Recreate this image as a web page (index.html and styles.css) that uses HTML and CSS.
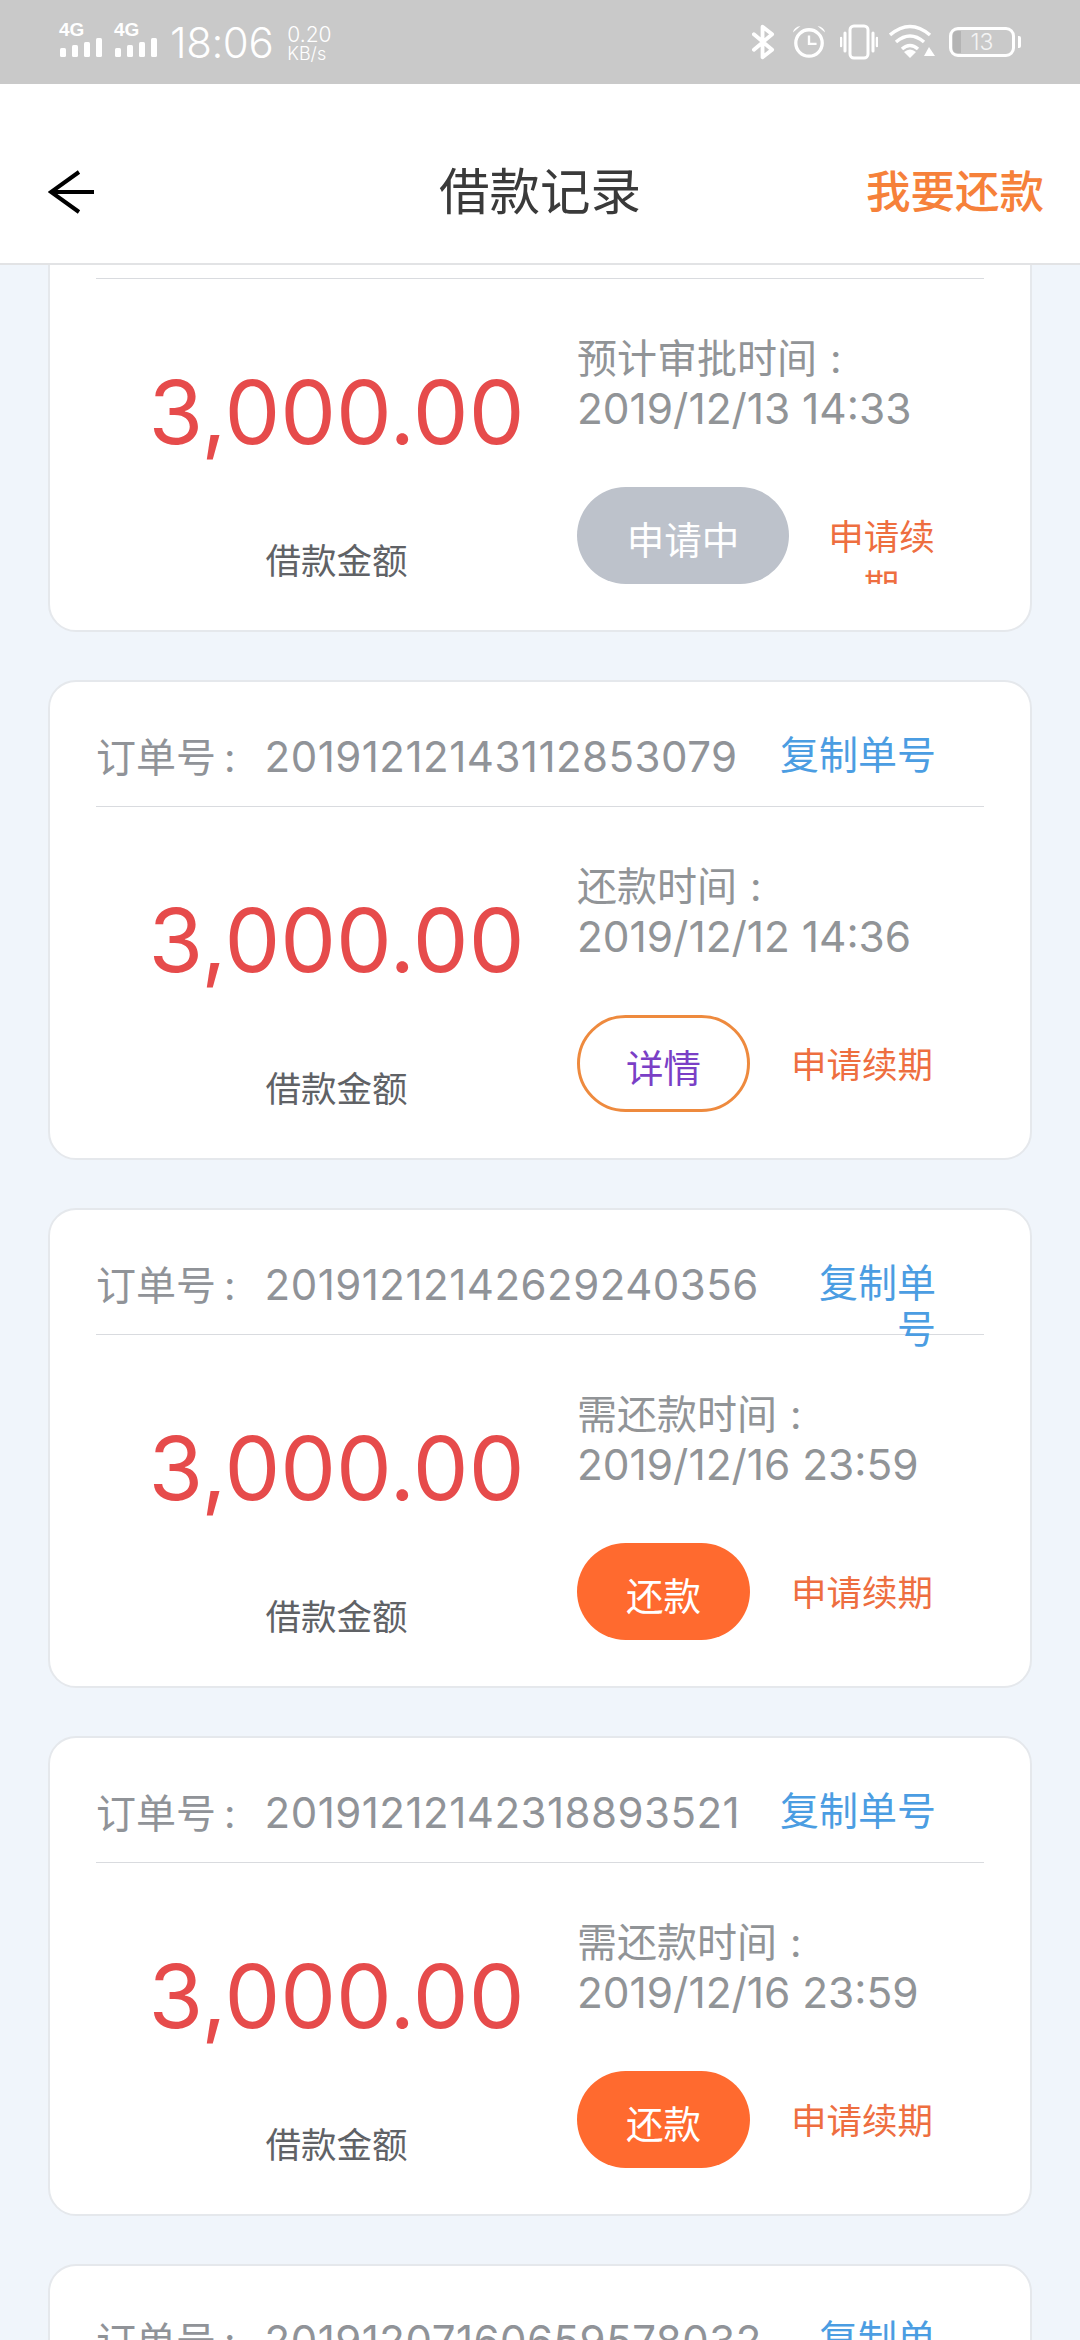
FILE: index.html
```html
<!DOCTYPE html>
<html lang="zh-CN">
<head>
<meta charset="utf-8">
<title>借款记录</title>
<link rel="stylesheet" href="styles.css">
</head>
<body>
<div class="status">
  <div class="status-left">
    <div class="sig"><span class="sig-label">4G</span>
      <svg class="sig-bars" width="44" height="20" viewBox="0 0 44 20"><rect x="1" y="10" width="6" height="9" rx="1.5"/><rect x="13" y="7" width="6" height="12" rx="1.5"/><rect x="25" y="4" width="6" height="15" rx="1.5"/><rect x="37" y="0" width="6" height="19" rx="1.5"/></svg></div>
    <div class="sig"><span class="sig-label">4G</span>
      <svg class="sig-bars" width="44" height="20" viewBox="0 0 44 20"><rect x="1" y="10" width="6" height="9" rx="1.5"/><rect x="13" y="7" width="6" height="12" rx="1.5"/><rect x="25" y="4" width="6" height="15" rx="1.5"/><rect x="37" y="0" width="6" height="19" rx="1.5"/></svg></div>
    <span class="clock">18:06</span>
    <div class="speed"><span>0.20</span><span class="speed-unit">KB/s</span></div>
  </div>
  <div class="status-right">
    <svg width="23" height="36" viewBox="0 0 24 36" class="ic ic-bt"><path d="M2 10 L21 26 L11 34 V2 L21 10 L2 26" fill="none" stroke="#fff" stroke-width="4" stroke-linejoin="round" stroke-linecap="round"/></svg>
    <svg width="34" height="36" viewBox="0 0 36 36" class="ic"><circle cx="18" cy="19" r="14" fill="none" stroke="#fff" stroke-width="3.5"/><path d="M18 11 V20 H26" fill="none" stroke="#fff" stroke-width="2.5"/><path d="M1 8 Q2 2 9 1 Z M35 8 Q34 2 27 1 Z" fill="#fff"/></svg>
    <svg width="38" height="36" viewBox="0 0 38 36" class="ic ic-vib"><rect x="10" y="2" width="18" height="32" rx="4" fill="none" stroke="#fff" stroke-width="3"/><path d="M5 9 V27 M33 9 V27" stroke="#fff" stroke-width="3" stroke-linecap="round"/><path d="M1 14 V22 M37 14 V22" stroke="#fff" stroke-width="2.5" stroke-linecap="round"/></svg>
    <svg width="46" height="36" viewBox="0 0 46 36" class="ic"><path d="M1 11 Q21 -6 41 11 M7 18 Q21 6 35 18 M13 25 Q21 18 29 25" fill="none" stroke="#fff" stroke-width="3.5"/><path d="M15 28 Q21 23 27 28 L21 34 Z" fill="#fff"/><path d="M40 23 L46 32 H35 Z" fill="#fff"/></svg>
    <div class="battery"><span class="battery-level"></span><span class="battery-num">13</span><span class="battery-cap"></span></div>
  </div>
</div>

<header class="nav">
  <svg class="back" width="48" height="44" viewBox="0 0 48 44"><path d="M31 2 L3 22 L31 42 M3 22 H46" fill="none" stroke="#000" stroke-width="4"/></svg>
  <h1 class="nav-title">借款记录</h1>
  <a class="nav-action">我要还款</a>
</header>

<main class="viewport">
  <div class="list">
    <section class="card">
      <div class="head"></div>
      <div class="body">
        <div class="left"><div class="amount">3,000.00</div><div class="amount-label">借款金额</div></div>
        <div class="right">
          <div class="meta">预计审批时间<span class="colon">:</span></div>
          <div class="meta meta-num">2019/12/13 14:33</div>
          <div class="actions"><span class="btn btn-gray">申请中</span><a class="renew">申请续期</a></div>
        </div>
      </div>
    </section>
    <section class="card">
      <div class="head"><span class="order">订单号<span class="order-colon">:</span><span class="order-num">20191212143112853079</span></span><a class="copy">复制单号</a></div>
      <div class="body">
        <div class="left"><div class="amount">3,000.00</div><div class="amount-label">借款金额</div></div>
        <div class="right">
          <div class="meta">还款时间<span class="colon">:</span></div>
          <div class="meta meta-num">2019/12/12 14:36</div>
          <div class="actions"><span class="btn btn-outline">详情</span><a class="renew">申请续期</a></div>
        </div>
      </div>
    </section>
    <section class="card">
      <div class="head"><span class="order">订单号<span class="order-colon">:</span><span class="order-num">20191212142629240356</span></span><a class="copy">复制单号</a></div>
      <div class="body">
        <div class="left"><div class="amount">3,000.00</div><div class="amount-label">借款金额</div></div>
        <div class="right">
          <div class="meta">需还款时间<span class="colon">:</span></div>
          <div class="meta meta-num">2019/12/16 23:59</div>
          <div class="actions"><span class="btn btn-orange">还款</span><a class="renew">申请续期</a></div>
        </div>
      </div>
    </section>
    <section class="card">
      <div class="head"><span class="order">订单号<span class="order-colon">:</span><span class="order-num">20191212142318893521</span></span><a class="copy">复制单号</a></div>
      <div class="body">
        <div class="left"><div class="amount">3,000.00</div><div class="amount-label">借款金额</div></div>
        <div class="right">
          <div class="meta">需还款时间<span class="colon">:</span></div>
          <div class="meta meta-num">2019/12/16 23:59</div>
          <div class="actions"><span class="btn btn-orange">还款</span><a class="renew">申请续期</a></div>
        </div>
      </div>
    </section>
    <section class="card">
      <div class="head"><span class="order">订单号<span class="order-colon">:</span><span class="order-num">20191207160659578032</span></span><a class="copy">复制单号</a></div>
    </section>
  </div>
</main>
</body>
</html>
```
FILE: styles.css
```css
* { box-sizing: border-box; }
html, body { margin: 0; padding: 0; height: 2340px; overflow: hidden; }
body {
  width: 1080px;
  background: #f0f5fb;
  font-family: "Inter", "Noto Sans CJK SC", sans-serif;
  display: flex;
  flex-direction: column;
}

/* status bar */
.status {
  height: 84px;
  flex: none;
  background: #c9c9c9;
  color: #fff;
  display: flex;
  justify-content: space-between;
  align-items: center;
  padding: 0 60px 0 59px;
}
.status-left { display: flex; align-items: center; }
.sig { display: flex; flex-direction: column; width: 44px; margin-right: 11px; margin-top: -4px; }
.sig-label { font: 700 19px/14px "Liberation Sans", sans-serif; height: 15px; }
.sig-bars { fill: #fff; display: block; }
.clock { font-size: 42px; line-height: 44px; font-weight: 300; margin-left: 1px; margin-top: 2px; letter-spacing: -0.4px; }
.speed { display: flex; flex-direction: column; font-size: 21px; line-height: 20px; margin-left: 14px; margin-top: 2px; font-weight: 300; }
.speed-unit { font-size: 18px; line-height: 17px; }
.status-right { display: flex; align-items: center; gap: 14px; margin-top: -1px; }
.ic { display: block; }
.ic-bt { margin-right: 3px; }
.ic-vib { margin-right: -3px; }
.battery {
  position: relative;
  width: 66px; height: 30px;
  border: 3px solid #fff;
  border-radius: 9px;
  display: flex; align-items: center; justify-content: center;
  margin-right: 5px;
}
.battery-level { position: absolute; left: 1px; top: 1px; bottom: 1px; width: 8px; background: #b4b4b4; border-radius: 4px 0 0 4px; }
.battery-num { font-size: 23px; font-weight: 300; color: #f4f4f4; }
.battery-cap { position: absolute; right: -9px; top: 6px; width: 3px; height: 12px; background: #fff; border-radius: 0 2px 2px 0; }

/* navigation */
.nav {
  height: 181px;
  flex: none;
  background: #fff;
  border-bottom: 2px solid #e2e3e5;
  display: grid;
  grid-template-columns: 1fr auto 1fr;
  align-items: center;
  padding: 37px 36px 0;
}
.back { display: block; margin-left: 12px; }
.nav-title { margin: 0; font-size: 50.5px; line-height: 60px; font-weight: 400; color: #3a3a3a; }
.nav-action { justify-self: end; font-size: 44.5px; line-height: 60px; font-weight: 500; color: #f6813a; }

/* list */
.viewport { flex: 1; overflow: hidden; min-height: 0; padding: 0 48px; }
.list { display: flex; flex-direction: column; gap: 48px; margin-top: -113px; }
.card {
  flex: none;
  height: 480px;
  background: #fff;
  border: 2px solid #e5e8ec;
  border-radius: 28px;
  padding: 0 46px;
}
.head {
  height: 125px;
  border-bottom: 1px solid #d9dbdf;
  display: flex;
  align-items: flex-start;
  padding-top: 50px;
  padding-right: 48px;
  gap: 30px;
}
.order { flex: none; font-size: 40px; line-height: 50px; color: #909398; white-space: nowrap; }
.order-colon { margin-left: 8px; }
.order-num { font-size: 42px; letter-spacing: 0.5px; margin-left: 29px; }
.copy { flex: 1; min-width: 0; text-align: right; font-size: 39px; line-height: 46px; color: #4b9de2; }

.body { display: flex; }
.left { width: 481px; flex: none; text-align: center; padding-top: 83px; }
.amount { font-size: 88.5px; line-height: 100px; color: #e64b4b; }
.amount-label { margin-top: 75px; font-size: 35.5px; line-height: 50px; color: #606266; }
.right { flex: none; width: 397px; padding-top: 55px; }
.meta { font-size: 40px; line-height: 50px; color: #919497; white-space: nowrap; }
.meta-num { font-size: 42.4px; }
.colon { margin-left: 13px; }
.actions { display: flex; margin-top: 53px; }
.btn {
  flex: none;
  height: 97px;
  border-radius: 49px;
  display: flex; align-items: center; justify-content: center;
  padding-top: 3px;
  font-size: 37.5px;
  white-space: nowrap;
}
.btn-gray { background: #bdc2cb; color: #fff; width: 212px; }
.btn-outline { border: 3px solid #ee8a3e; color: #7a3fc6; width: 173px; }
.btn-orange { background: #ff6a2f; color: #fff; width: 173px; }
.renew {
  flex: 1;
  min-width: 0;
  height: 97px;
  overflow: hidden;
  padding: 26px 30px 0;
  text-align: center;
  font-size: 35.5px;
  line-height: 50px;
  color: #ee6e40;
}
```
